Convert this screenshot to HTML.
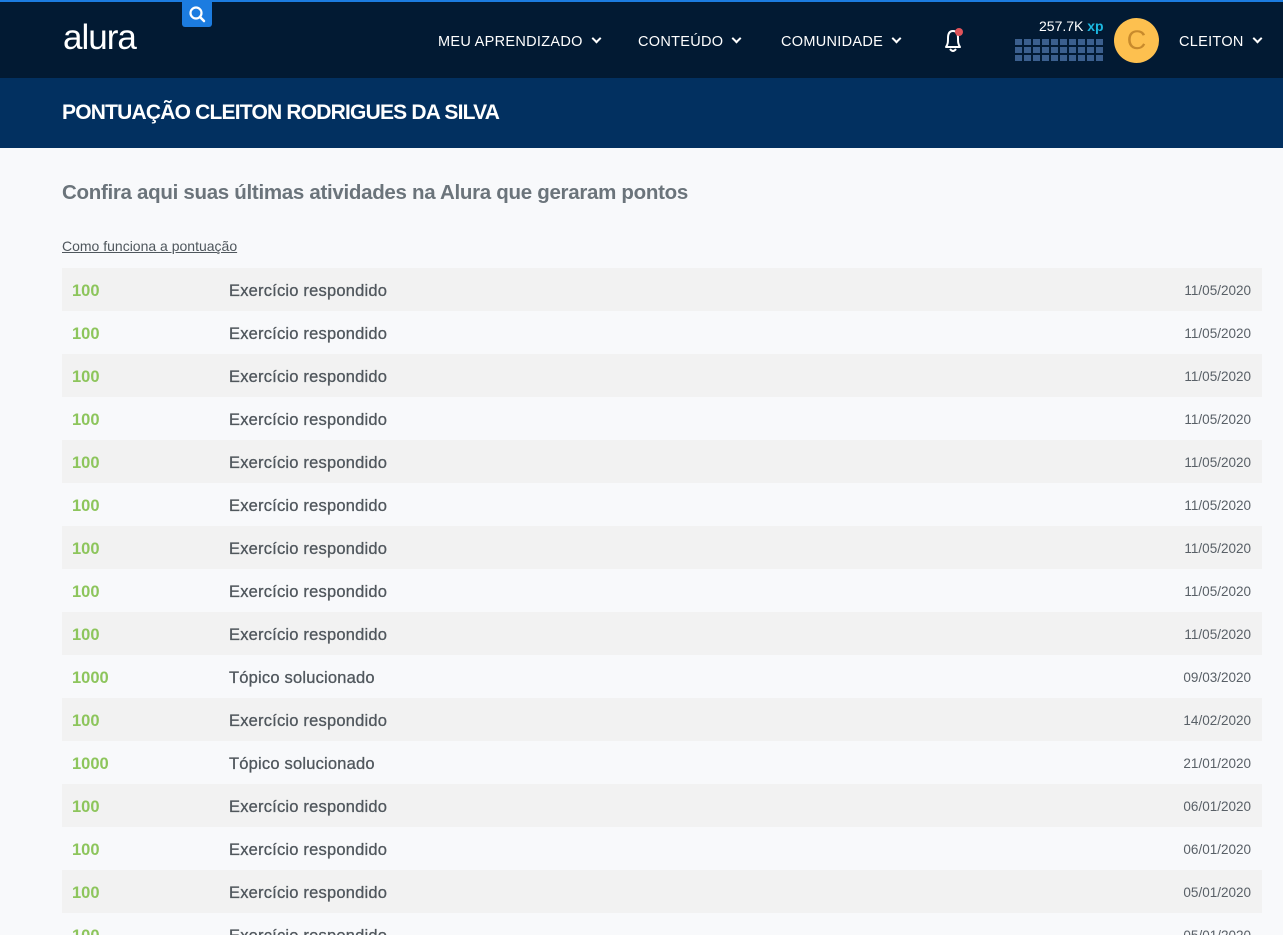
<!DOCTYPE html><html><head><meta charset="utf-8"><style>
*{margin:0;padding:0;box-sizing:border-box}
html,body{width:1283px;height:935px;overflow:hidden}
body{position:relative;background:#f8f9fb;font-family:"Liberation Sans",sans-serif}
.top{position:absolute;left:0;top:0;width:1283px;height:78px;background:#021a33;border-top:2px solid #1c7ce0}
.logo{position:absolute;left:63px;top:16px;color:#fff;font-size:35px;letter-spacing:-1px}
.search{position:absolute;left:182px;top:0;width:30px;height:25px;background:#1c7ce0;border-radius:0 0 3px 3px}
.nav{position:absolute;top:32px;color:#fff;font-size:14.5px;letter-spacing:.3px}
.chev{display:inline-block;width:7px;height:7px;border-right:2px solid #fff;border-bottom:2px solid #fff;transform:rotate(45deg);margin-left:10px;position:relative;top:-4px}
.banner{position:absolute;top:78px;left:0;width:1283px;height:70px;background:#023060}
.banner h1{position:absolute;left:62px;top:23px;color:#fff;font-size:21px;font-weight:bold;letter-spacing:-.8px}
h2{position:absolute;left:62px;top:181px;color:#6b747b;font-size:20.5px;font-weight:bold;letter-spacing:-.3px}
.link{position:absolute;left:62px;top:238px;color:#4f575d;font-size:14px;text-decoration:underline}
.row{position:absolute;left:62px;width:1200px;height:43px;font-size:16.5px}
.row.g{background:#f2f2f2}
.pts{position:absolute;left:10px;top:14px;color:#8dc55c;font-weight:bold}
.desc{position:absolute;left:167px;top:14px;color:#50575d;letter-spacing:.2px;-webkit-text-stroke:.3px #50575d}
.dt{position:absolute;right:11px;top:15px;color:#596067;font-size:13.5px}
.grid{position:absolute;left:1015px;top:37px;display:grid;grid-template-columns:repeat(10,7px);gap:2px}
.grid i{width:7px;height:6px;background:#3b5f8e;display:block}
</style></head><body>
<div class="top">
<div class="logo">alura</div>
<div class="search"><svg width="30" height="25" viewBox="0 0 30 25"><circle cx="14" cy="11" r="5.5" fill="none" stroke="#fff" stroke-width="2.2"/><line x1="18" y1="15" x2="22" y2="19" stroke="#fff" stroke-width="2.5" stroke-linecap="round"/></svg></div>
<div class="nav" style="left:438px">MEU APRENDIZADO<span class="chev"></span></div>
<div class="nav" style="left:638px">CONTEÚDO<span class="chev"></span></div>
<div class="nav" style="left:781px">COMUNIDADE<span class="chev"></span></div>
<svg style="position:absolute;left:940px;top:24px" width="28" height="30" viewBox="0 0 28 30"><path d="M6 21 C8 18 8 16 8 12 C8 7 10 5 13 5 C16 5 18 7 18 12 C18 16 18 18 20 21 Z" fill="none" stroke="#fff" stroke-width="2" stroke-linejoin="round"/><path d="M10 23 Q13 27 16 23" fill="none" stroke="#fff" stroke-width="2"/><circle cx="19" cy="6" r="4" fill="#e0535a"/></svg>
<div style="position:absolute;left:1039px;top:16px;color:#fff;font-size:14px">257.7K <b style="color:#1cb8e0">xp</b></div>
<div class="grid">
<i></i><i></i><i></i><i></i><i></i><i></i><i></i><i></i><i></i><i></i><i></i><i></i><i></i><i></i><i></i><i></i><i></i><i></i><i></i><i></i><i></i><i></i><i></i><i></i><i></i><i></i><i></i><i></i><i></i><i></i>
</div>
<div style="position:absolute;left:1114px;top:16px;width:45px;height:45px;border-radius:50%;background:#fdc04f;color:#c88a2c;font-size:27px;text-align:center;line-height:45px">C</div>
<div class="nav" style="left:1179px">CLEITON<span class="chev"></span></div>
</div>
<div class="banner"><h1>PONTUAÇÃO CLEITON RODRIGUES DA SILVA</h1></div>
<h2>Confira aqui suas últimas atividades na Alura que geraram pontos</h2>
<div class="link">Como funciona a pontuação</div>
<div class="row g" style="top:268px"><span class="pts">100</span><span class="desc">Exercício respondido</span><span class="dt">11/05/2020</span></div>
<div class="row" style="top:311px"><span class="pts">100</span><span class="desc">Exercício respondido</span><span class="dt">11/05/2020</span></div>
<div class="row g" style="top:354px"><span class="pts">100</span><span class="desc">Exercício respondido</span><span class="dt">11/05/2020</span></div>
<div class="row" style="top:397px"><span class="pts">100</span><span class="desc">Exercício respondido</span><span class="dt">11/05/2020</span></div>
<div class="row g" style="top:440px"><span class="pts">100</span><span class="desc">Exercício respondido</span><span class="dt">11/05/2020</span></div>
<div class="row" style="top:483px"><span class="pts">100</span><span class="desc">Exercício respondido</span><span class="dt">11/05/2020</span></div>
<div class="row g" style="top:526px"><span class="pts">100</span><span class="desc">Exercício respondido</span><span class="dt">11/05/2020</span></div>
<div class="row" style="top:569px"><span class="pts">100</span><span class="desc">Exercício respondido</span><span class="dt">11/05/2020</span></div>
<div class="row g" style="top:612px"><span class="pts">100</span><span class="desc">Exercício respondido</span><span class="dt">11/05/2020</span></div>
<div class="row" style="top:655px"><span class="pts">1000</span><span class="desc">Tópico solucionado</span><span class="dt">09/03/2020</span></div>
<div class="row g" style="top:698px"><span class="pts">100</span><span class="desc">Exercício respondido</span><span class="dt">14/02/2020</span></div>
<div class="row" style="top:741px"><span class="pts">1000</span><span class="desc">Tópico solucionado</span><span class="dt">21/01/2020</span></div>
<div class="row g" style="top:784px"><span class="pts">100</span><span class="desc">Exercício respondido</span><span class="dt">06/01/2020</span></div>
<div class="row" style="top:827px"><span class="pts">100</span><span class="desc">Exercício respondido</span><span class="dt">06/01/2020</span></div>
<div class="row g" style="top:870px"><span class="pts">100</span><span class="desc">Exercício respondido</span><span class="dt">05/01/2020</span></div>
<div class="row" style="top:913px;height:22px;overflow:hidden"><span class="pts">100</span><span class="desc">Exercício respondido</span><span class="dt">05/01/2020</span></div>
</body></html>
